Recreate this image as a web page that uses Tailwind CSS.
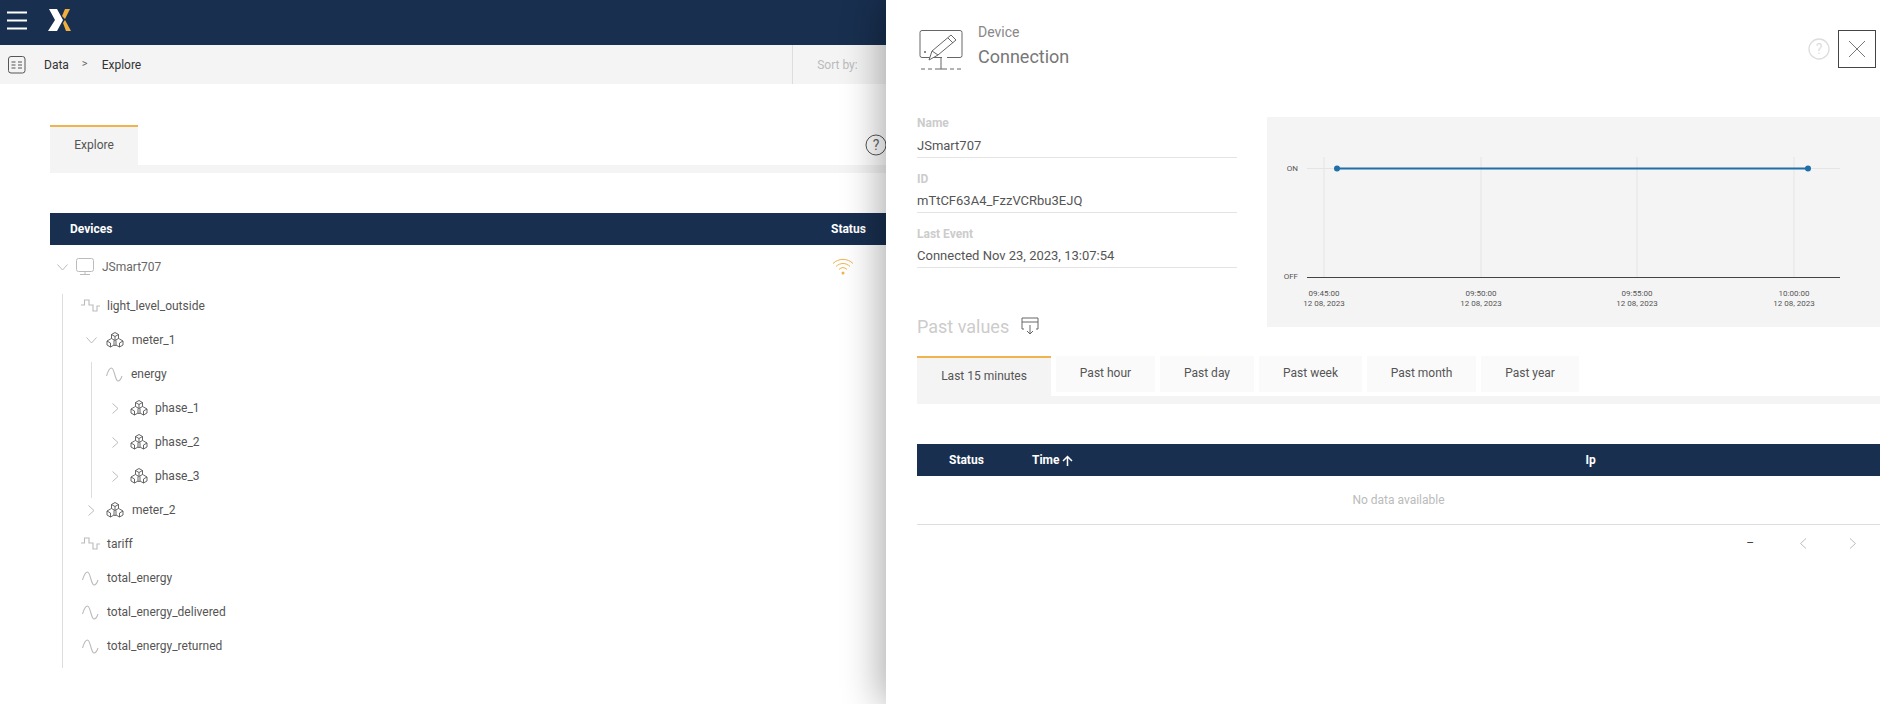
<!DOCTYPE html>
<html lang="en">
<head>
  <meta charset="UTF-8" />
  <title>Data Explore</title>
  <script src="https://cdn.jsdelivr.net/npm/@tailwindcss/browser@4"></script>
</head>
<body class="font-['Roboto',sans-serif] text-[#444] text-[12px] bg-white">
<!-- Shared tree icons -->
<svg class="hidden">
  <symbol id="hex" viewBox="0 0 18 16"><g fill="none" stroke="#555" stroke-width=".9" stroke-linejoin="round"><path d="M9 .5l3.500 2v4l-3.500 2-3.500-2v-4zM5.500 6.500l-1 .5-3.500 2v4l3.500 2 3.500-2M12.500 6.500l1 .5 3.500 2v4l-3.500 2-3.500-2M8 13v-4.500M10 13v-4.500M9 4.500v4M9 4.500L5.500 2.500M9 4.500l3.500-2M4.500 11v4M13.500 11v4M4.500 11L1 9M13.500 11l3.500-2M8 13l1 .8 1-.8"/></g></symbol>
  <symbol id="wave" viewBox="0 0 17 15"><path d="M.5 9C2 4 3.500 1 5.500 1c3 0 3.500 13 6.500 13 2 0 3-2 4-5" fill="none" stroke="#bbb" stroke-width="1.100"/></symbol>
  <symbol id="step" viewBox="0 0 20 14"><path d="M0 6h3.500V1h4.500v5h4v6h4V7h3" fill="none" stroke="#bbb" stroke-width="1.100"/></symbol>
  <symbol id="down" viewBox="0 0 11 7"><path d="M.5.5l5 5.500 5-5.500" fill="none" stroke="#bbb"/></symbol>
  <symbol id="right" viewBox="0 0 7 11"><path d="M.5.500L6 5.500l-5.500 5" fill="none" stroke="#bbb"/></symbol>
</svg>
<div class="relative w-[1894px] h-[704px] overflow-hidden">

  <!-- Top bar -->
  <div class="h-[45px] bg-[#182f4f] flex items-center pl-[7px] pb-[4px]">
    <svg width="20" height="19" viewBox="0 0 20 19" fill="none" stroke="#fff" stroke-width="2.200"><path d="M0 1.500h20M0 9.500h20M0 17.500h20"/></svg>
    <svg class="ml-[21px]" width="23" height="23" viewBox="0 0 23 23"><path d="M1 0h8l6 11-6 11H0l7-11z" fill="#fff"/><path d="M14 7l3-7h5l-5 10z" fill="#f0b040"/><path d="M15 14l2-3 6 11h-5z" fill="#f0b040"/></svg>
  </div>

  <!-- Breadcrumb -->
  <div class="h-[39px] bg-[#f4f4f4] flex items-center text-[12px] text-[#333]">
    <svg class="ml-[8px]" width="18" height="18" viewBox="0 0 18 18" fill="none" stroke="#555"><rect x=".5" y=".5" width="16.500" height="16.500" rx="2.500"/><path d="M3.500 6h4M3.500 9h4M3.500 12h4M10 6h4M10 9h4M10 12h4"/></svg>
    <span class="ml-[18px]">Data</span>
    <span class="ml-[13px] text-[11px] text-[#666]">&gt;</span>
    <span class="ml-[14px]">Explore</span>
    <div class="ml-[651px] h-full border-l border-[#ddd] pl-[24px] flex items-center text-[#bbb]">Sort by:</div>
  </div>

  <!-- Main area -->
  <div class="pl-[50px] pt-[41px]">
    <div class="flex">
      <div class="w-[88px] h-[40px] pb-[2px] bg-[#f4f4f4] border-t-2 border-[#f0b44d] flex items-center justify-center text-[12px] text-[#555]">Explore</div>
      <div class="w-[749px] flex justify-end items-center">
        <svg width="22" height="22" viewBox="0 0 22 22" fill="none"><circle cx="11" cy="11" r="10" stroke="#555"/><text x="11" y="16" text-anchor="middle" font-size="14" fill="#666">?</text></svg>
      </div>
    </div>
    <div class="h-[8px] bg-[#f4f4f4]"></div>

    <div class="mt-[40px] h-[32px] bg-[#182f4f] text-white font-bold flex items-center pl-[20px]">
      <span class="w-[761px]">Devices</span><span>Status</span>
    </div>

    <!-- Device tree -->
    <div class="relative h-[440px] text-[#555]">
      <div class="flex items-center h-[34px] mt-[5px]">
        <svg class="ml-[7px]" width="11" height="7"><use href="#down"/></svg>
        <svg class="ml-[8px]" width="18" height="18" viewBox="0 0 18 18" fill="none" stroke="#bbb"><rect x=".5" y=".5" width="17" height="13" rx="2"/><path d="M9 13.500v3M4 16.500h10"/></svg>
        <span class="ml-[8px] text-[#666]">JSmart707</span>
      </div>
      <div class="absolute left-[12px] top-[44px] h-[374px] w-px bg-[#ddd]"></div>
      <div class="absolute left-[41px] top-[112px] h-[136px] w-px bg-[#ddd]"></div>
      <div class="absolute left-[782px] top-[8px]">
        <svg width="22" height="18" viewBox="0 0 22 18" fill="none" stroke="#f0b44d"><path d="M1 5.500c5.500-5.500 14.500-5.500 20 0M4 8.500c4-4 10-4 14 0M7 11.500c2.500-2.500 5.500-2.500 8 0"/><circle cx="11" cy="15" r="1.500" fill="#f0b44d" stroke="none"/></svg>
      </div>

      <div class="mt-[5px]">
        <div class="flex items-center h-[34px] pl-[31px]"><svg width="20" height="14"><use href="#step"/></svg><span class="ml-[6px]">light_level_outside</span></div>
        <div class="flex items-center h-[34px] pl-[36px]"><svg width="11" height="7"><use href="#down"/></svg><svg class="ml-[9px]" width="18" height="16"><use href="#hex"/></svg><span class="ml-[8px]">meter_1</span></div>
        <div class="flex items-center h-[34px] pl-[56px]"><svg width="17" height="15"><use href="#wave"/></svg><span class="ml-[8px]">energy</span></div>
        <div class="flex items-center h-[34px] pl-[62px]"><svg width="7" height="11"><use href="#right"/></svg><svg class="ml-[11px]" width="18" height="16"><use href="#hex"/></svg><span class="ml-[7px]">phase_1</span></div>
        <div class="flex items-center h-[34px] pl-[62px]"><svg width="7" height="11"><use href="#right"/></svg><svg class="ml-[11px]" width="18" height="16"><use href="#hex"/></svg><span class="ml-[7px]">phase_2</span></div>
        <div class="flex items-center h-[34px] pl-[62px]"><svg width="7" height="11"><use href="#right"/></svg><svg class="ml-[11px]" width="18" height="16"><use href="#hex"/></svg><span class="ml-[7px]">phase_3</span></div>
        <div class="flex items-center h-[34px] pl-[38px]"><svg width="7" height="11"><use href="#right"/></svg><svg class="ml-[11px]" width="18" height="16"><use href="#hex"/></svg><span class="ml-[8px]">meter_2</span></div>
        <div class="flex items-center h-[34px] pl-[31px]"><svg width="20" height="14"><use href="#step"/></svg><span class="ml-[6px]">tariff</span></div>
        <div class="flex items-center h-[34px] pl-[32px]"><svg width="17" height="15"><use href="#wave"/></svg><span class="ml-[8px]">total_energy</span></div>
        <div class="flex items-center h-[34px] pl-[32px]"><svg width="17" height="15"><use href="#wave"/></svg><span class="ml-[8px]">total_energy_delivered</span></div>
        <div class="flex items-center h-[34px] pl-[32px]"><svg width="17" height="15"><use href="#wave"/></svg><span class="ml-[8px]">total_energy_returned</span></div>
      </div>
    </div>
  </div>

  <!-- Slide-over drawer -->
  <div class="absolute top-0 right-0 w-[1008px] h-full bg-white shadow-[-6px_0_36px_rgba(0,0,0,0.32)] pl-[31px] pr-[14px]">
    <div class="relative h-[117px] flex items-start pt-[30px]">
      <svg class="ml-[2px]" width="44" height="42" viewBox="0 0 44 42" fill="none" stroke="#666"><path d="M23 27.500H3a2 2 0 0 1-2-2V2.500a2 2 0 0 1 2-2h38a2 2 0 0 1 2 2v23a2 2 0 0 1-2 2H28"/><path d="M10 30l3-9L32 5l5 5-18 15z" fill="#fff"/><path d="M13 21l6 4M29 8l5 5"/><path d="M22 28v11M2 39h4M9 39h4M16 39h12M31 39h4M38 39h4"/><circle cx="6" cy="22" r="1" fill="#666" stroke="none"/></svg>
      <div class="ml-[15px] -mt-[8px]">
        <div class="text-[14px] text-[#888] leading-[20px]">Device</div>
        <div class="text-[18px] text-[#777] leading-[24px] mt-[3px]">Connection</div>
      </div>
      <svg class="absolute left-[891px] top-[38px]" width="22" height="22" viewBox="0 0 22 22" fill="none"><circle cx="11" cy="11" r="10" stroke="#ddd" stroke-width="1.300"/><text x="11" y="16" text-anchor="middle" font-size="14" fill="#ddd">?</text></svg>
      <button class="absolute left-[921px] top-[30px] w-[38px] h-[38px] border border-[#444] flex items-center justify-center">
        <svg width="16" height="16" viewBox="0 0 16 16" stroke="#777"><path d="M0 0l16 16M16 0L0 16"/></svg>
      </button>
    </div>

    <div class="flex">
      <div class="w-[320px]">
        <div class="h-[41px] border-b border-[#e4e4e4]">
          <div class="text-[#ccc] font-bold leading-[13px]">Name</div>
          <div class="text-[#555] text-[13px] mt-[8px] leading-[16px]">JSmart707</div>
        </div>
        <div class="mt-[15px] h-[40px] border-b border-[#e4e4e4]">
          <div class="text-[#ccc] font-bold leading-[13px]">ID</div>
          <div class="text-[#555] text-[13px] mt-[7px] leading-[16px]">mTtCF63A4_FzzVCRbu3EJQ</div>
        </div>
        <div class="mt-[15px] h-[40px] border-b border-[#e4e4e4]">
          <div class="text-[#ccc] font-bold leading-[13px]">Last Event</div>
          <div class="text-[#555] text-[13px] mt-[7px] leading-[16px]">Connected Nov 23, 2023, 13:07:54</div>
        </div>
      </div>
      <div class="ml-[30px] w-[613px] h-[210px] bg-[#f4f4f4]">
        <svg width="613" height="210" viewBox="0 0 613 210" font-family="Roboto" font-size="8" fill="#555">
          <g stroke="#e4e4e4"><path d="M57 40v120M214 40v120M370 40v120M527 40v120M40 51.500h533"/></g>
          <path d="M40 160.500h533" stroke="#444"/>
          <path d="M70 51.500h471" stroke="#1f6fa8" stroke-width="2"/>
          <circle cx="70" cy="51.500" r="3" fill="#1f6fa8"/><circle cx="541" cy="51.500" r="3" fill="#1f6fa8"/>
          <text x="31" y="53.500" text-anchor="end">ON</text><text x="31" y="161.500" text-anchor="end">OFF</text>
          <g text-anchor="middle">
            <text x="57" y="179">09:45:00</text><text x="57" y="189">12 08, 2023</text>
            <text x="214" y="179">09:50:00</text><text x="214" y="189">12 08, 2023</text>
            <text x="370" y="179">09:55:00</text><text x="370" y="189">12 08, 2023</text>
            <text x="527" y="179">10:00:00</text><text x="527" y="189">12 08, 2023</text>
          </g>
        </svg>
      </div>
    </div>

    <div class="-mt-[12px] flex items-center h-[22px]">
      <span class="text-[18px] text-[#ccc]">Past values</span>
      <svg class="ml-[12px]" width="18" height="18" viewBox="0 0 18 18" fill="none" stroke="#666"><path d="M3 12H1V1h16v11h-2M1 5h16M9 8v9M6 14l3 3 3-3"/></svg>
    </div>

    <div class="mt-[19px] flex gap-[5px] text-[#555]">
      <div class="w-[134px] h-[40px] pb-[2px] bg-[#f4f4f4] border-t-2 border-[#f0b44d] flex items-center justify-center">Last 15 minutes</div>
      <div class="w-[99px] h-[36px] pb-[2px] bg-[#fafafa] flex items-center justify-center">Past hour</div>
      <div class="w-[94px] h-[36px] pb-[2px] bg-[#fafafa] flex items-center justify-center">Past day</div>
      <div class="w-[103px] h-[36px] pb-[2px] bg-[#fafafa] flex items-center justify-center">Past week</div>
      <div class="w-[109px] h-[36px] pb-[2px] bg-[#fafafa] flex items-center justify-center">Past month</div>
      <div class="w-[98px] h-[36px] pb-[2px] bg-[#fafafa] flex items-center justify-center">Past year</div>
    </div>
    <div class="h-[8px] bg-[#f4f4f4]"></div>

    <div class="mt-[40px] h-[32px] bg-[#182f4f] text-white font-bold flex items-center">
      <span class="ml-[32px] w-[83px]">Status</span>
      <span class="flex items-center">Time
        <svg class="ml-[2px]" width="11" height="11" viewBox="0 0 11 11" fill="none" stroke="#fff" stroke-width="1.500"><path d="M5.500 11V1.500M1 6l4.500-4.500L10 6"/></svg>
      </span>
      <span class="ml-[513px]">Ip</span>
    </div>
    <div class="h-[49px] border-b border-[#ddd] flex items-center justify-center text-[#bbb]">No data available</div>
    <div class="h-[36px] flex items-center justify-end text-[#444]">
      <span>–</span>
      <svg class="ml-[45px]" width="8" height="11" viewBox="0 0 8 11" fill="none" stroke="#bbb"><path d="M7 .500L1.500 5.500l5.500 5"/></svg>
      <svg class="ml-[42px] mr-[23px]" width="8" height="11" viewBox="0 0 8 11" fill="none" stroke="#bbb"><path d="M1 .500l5.500 5-5.500 5"/></svg>
    </div>
  </div>
</div>
</body>
</html>
